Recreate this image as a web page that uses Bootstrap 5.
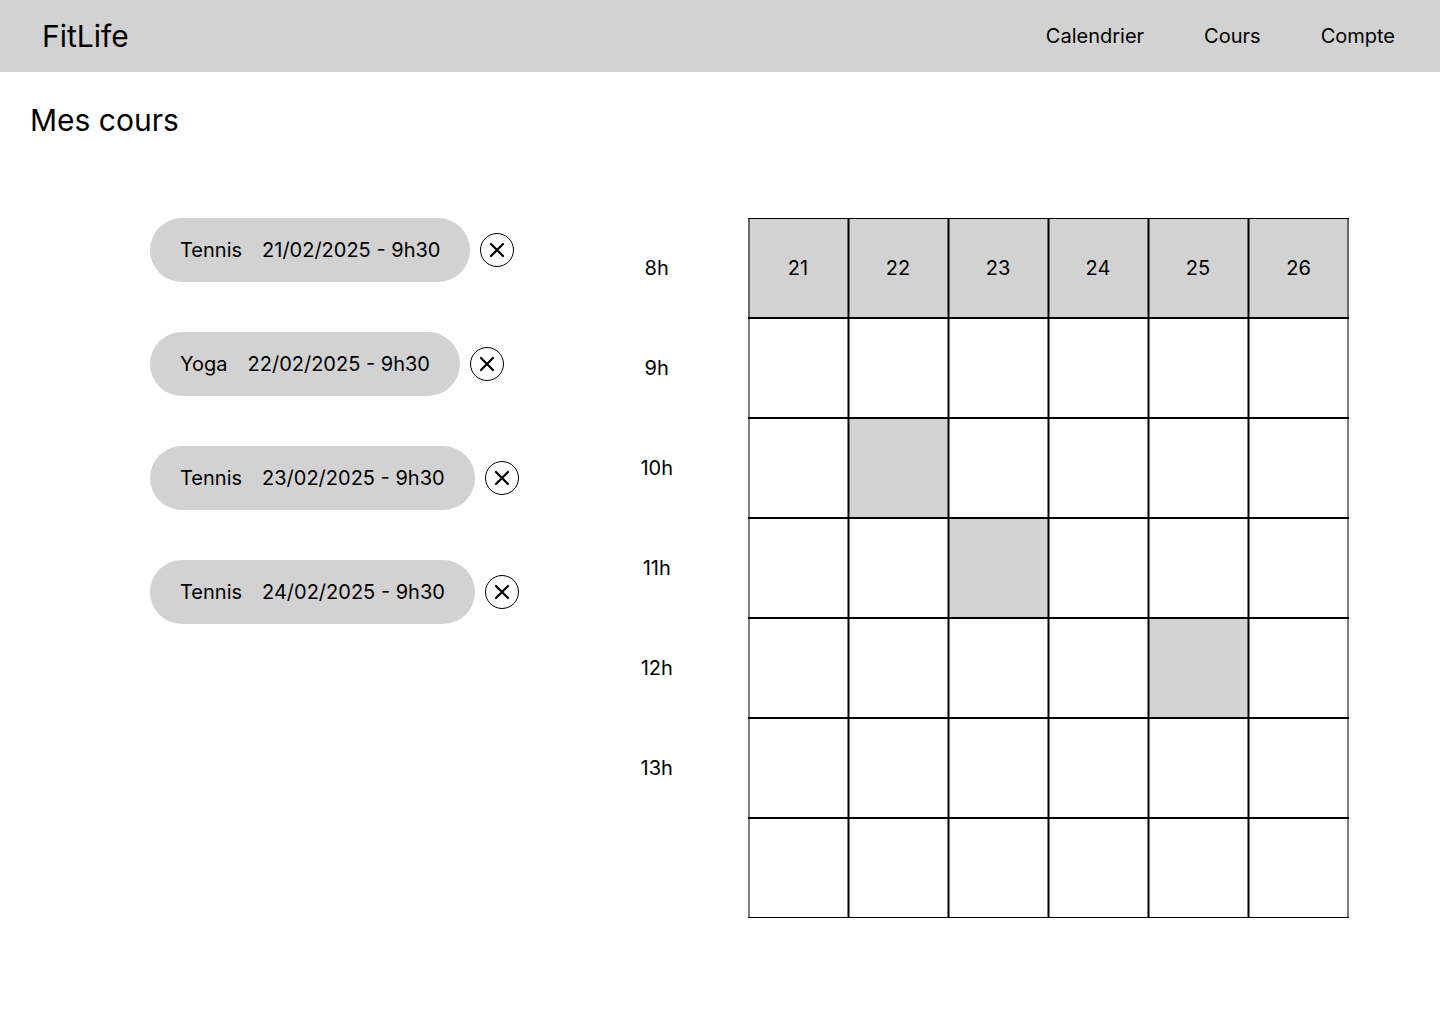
<!DOCTYPE html>
<html lang="fr">
<head>
<meta charset="utf-8">
<meta name="viewport" content="width=device-width, initial-scale=1">
<title>FitLife - Mes cours</title>
<link href="https://cdn.jsdelivr.net/npm/bootstrap@5.3.0/dist/css/bootstrap.min.css" rel="stylesheet">
<style>
:root { --fill: #d2d2d2; --half: rgba(0, 0, 0, .5); }
body { font-family: Inter, "Liberation Sans", sans-serif; font-size: 20px; line-height: 24px; color: #000; background: #fff; }
.topbar { background: var(--fill); padding: 18px 45px 18px 42px; }
.brand, .page-title { font-size: 30px; line-height: 36px; font-weight: 400; color: #000; }
.topbar-links { gap: 60px; }
.topbar-links a { color: #000; text-decoration: none; }
.page-title { margin: 30px 30px 80px; }
.planner { padding: 0 91px 50px 150px; }
.course-list { gap: 50px; }
.course { gap: 10px; }
.course-pill { background: var(--fill); gap: 20px; padding: 20px 30px; }
.course-remove { width: 34px; height: 34px; border: 1px solid #000; background: #fff; color: #000; }
.hours { margin-right: 75px; }
.hours li { height: 100px; }
.calendar { border-collapse: separate; border-spacing: 0; table-layout: fixed; width: 601px; }
.calendar th, .calendar td {
  width: 100px; height: 100px; padding: 0; text-align: center; vertical-align: middle; font-weight: 400;
  box-shadow: inset 0 1px #000, inset 0 -1px #000, inset 1px 0 #000, inset 2px 0 var(--half), inset -1px 0 var(--half);
}
.calendar tr > :first-child { box-shadow: inset 0 1px #000, inset 0 -1px #000, inset 2px 0 var(--half), inset -1px 0 var(--half); }
.calendar tr > :last-child { width: 101px; box-shadow: inset 0 1px #000, inset 0 -1px #000, inset 1px 0 #000, inset 2px 0 var(--half), inset -2px 0 var(--half); }
.calendar th, .calendar .booked { background: var(--fill); }
</style>
<script src="https://cdn.jsdelivr.net/npm/bootstrap@5.3.0/dist/js/bootstrap.bundle.min.js" defer></script>
</head>
<body>
<header class="topbar d-flex align-items-center justify-content-between">
  <a class="brand text-decoration-none" href="#">FitLife</a>
  <nav class="topbar-links d-flex" aria-label="Principale">
    <a href="#">Calendrier</a>
    <a href="#">Cours</a>
    <a href="#">Compte</a>
  </nav>
</header>
<main>
  <h1 class="page-title">Mes cours</h1>
  <div class="planner d-flex align-items-start">
    <ul class="course-list list-unstyled d-flex flex-column mb-0">
      <li class="course d-flex align-items-center">
        <div class="course-pill d-flex rounded-pill"><span>Tennis</span><span>21/02/2025 - 9h30</span></div>
        <button type="button" class="course-remove rounded-circle d-flex align-items-center justify-content-center p-0" aria-label="Annuler Tennis 21/02/2025"><svg width="16" height="16" viewBox="0 0 16 16" fill="none" stroke="currentColor" stroke-width="2.2" stroke-linecap="round" aria-hidden="true"><path d="M2 2l12 12M14 2L2 14"/></svg></button>
      </li>
      <li class="course d-flex align-items-center">
        <div class="course-pill d-flex rounded-pill"><span>Yoga</span><span>22/02/2025 - 9h30</span></div>
        <button type="button" class="course-remove rounded-circle d-flex align-items-center justify-content-center p-0" aria-label="Annuler Yoga 22/02/2025"><svg width="16" height="16" viewBox="0 0 16 16" fill="none" stroke="currentColor" stroke-width="2.2" stroke-linecap="round" aria-hidden="true"><path d="M2 2l12 12M14 2L2 14"/></svg></button>
      </li>
      <li class="course d-flex align-items-center">
        <div class="course-pill d-flex rounded-pill"><span>Tennis</span><span>23/02/2025 - 9h30</span></div>
        <button type="button" class="course-remove rounded-circle d-flex align-items-center justify-content-center p-0" aria-label="Annuler Tennis 23/02/2025"><svg width="16" height="16" viewBox="0 0 16 16" fill="none" stroke="currentColor" stroke-width="2.2" stroke-linecap="round" aria-hidden="true"><path d="M2 2l12 12M14 2L2 14"/></svg></button>
      </li>
      <li class="course d-flex align-items-center">
        <div class="course-pill d-flex rounded-pill"><span>Tennis</span><span>24/02/2025 - 9h30</span></div>
        <button type="button" class="course-remove rounded-circle d-flex align-items-center justify-content-center p-0" aria-label="Annuler Tennis 24/02/2025"><svg width="16" height="16" viewBox="0 0 16 16" fill="none" stroke="currentColor" stroke-width="2.2" stroke-linecap="round" aria-hidden="true"><path d="M2 2l12 12M14 2L2 14"/></svg></button>
      </li>
    </ul>
    <div class="d-flex ms-auto">
      <ul class="hours list-unstyled mb-0">
        <li class="d-flex align-items-center justify-content-center">8h</li>
        <li class="d-flex align-items-center justify-content-center">9h</li>
        <li class="d-flex align-items-center justify-content-center">10h</li>
        <li class="d-flex align-items-center justify-content-center">11h</li>
        <li class="d-flex align-items-center justify-content-center">12h</li>
        <li class="d-flex align-items-center justify-content-center">13h</li>
      </ul>
      <table class="calendar">
        <thead>
          <tr><th scope="col">21</th><th scope="col">22</th><th scope="col">23</th><th scope="col">24</th><th scope="col">25</th><th scope="col">26</th></tr>
        </thead>
        <tbody>
          <tr><td></td><td></td><td></td><td></td><td></td><td></td></tr>
          <tr><td></td><td class="booked"></td><td></td><td></td><td></td><td></td></tr>
          <tr><td></td><td></td><td class="booked"></td><td></td><td></td><td></td></tr>
          <tr><td></td><td></td><td></td><td></td><td class="booked"></td><td></td></tr>
          <tr><td></td><td></td><td></td><td></td><td></td><td></td></tr>
          <tr><td></td><td></td><td></td><td></td><td></td><td></td></tr>
        </tbody>
      </table>
    </div>
  </div>
</main>
</body>
</html>
